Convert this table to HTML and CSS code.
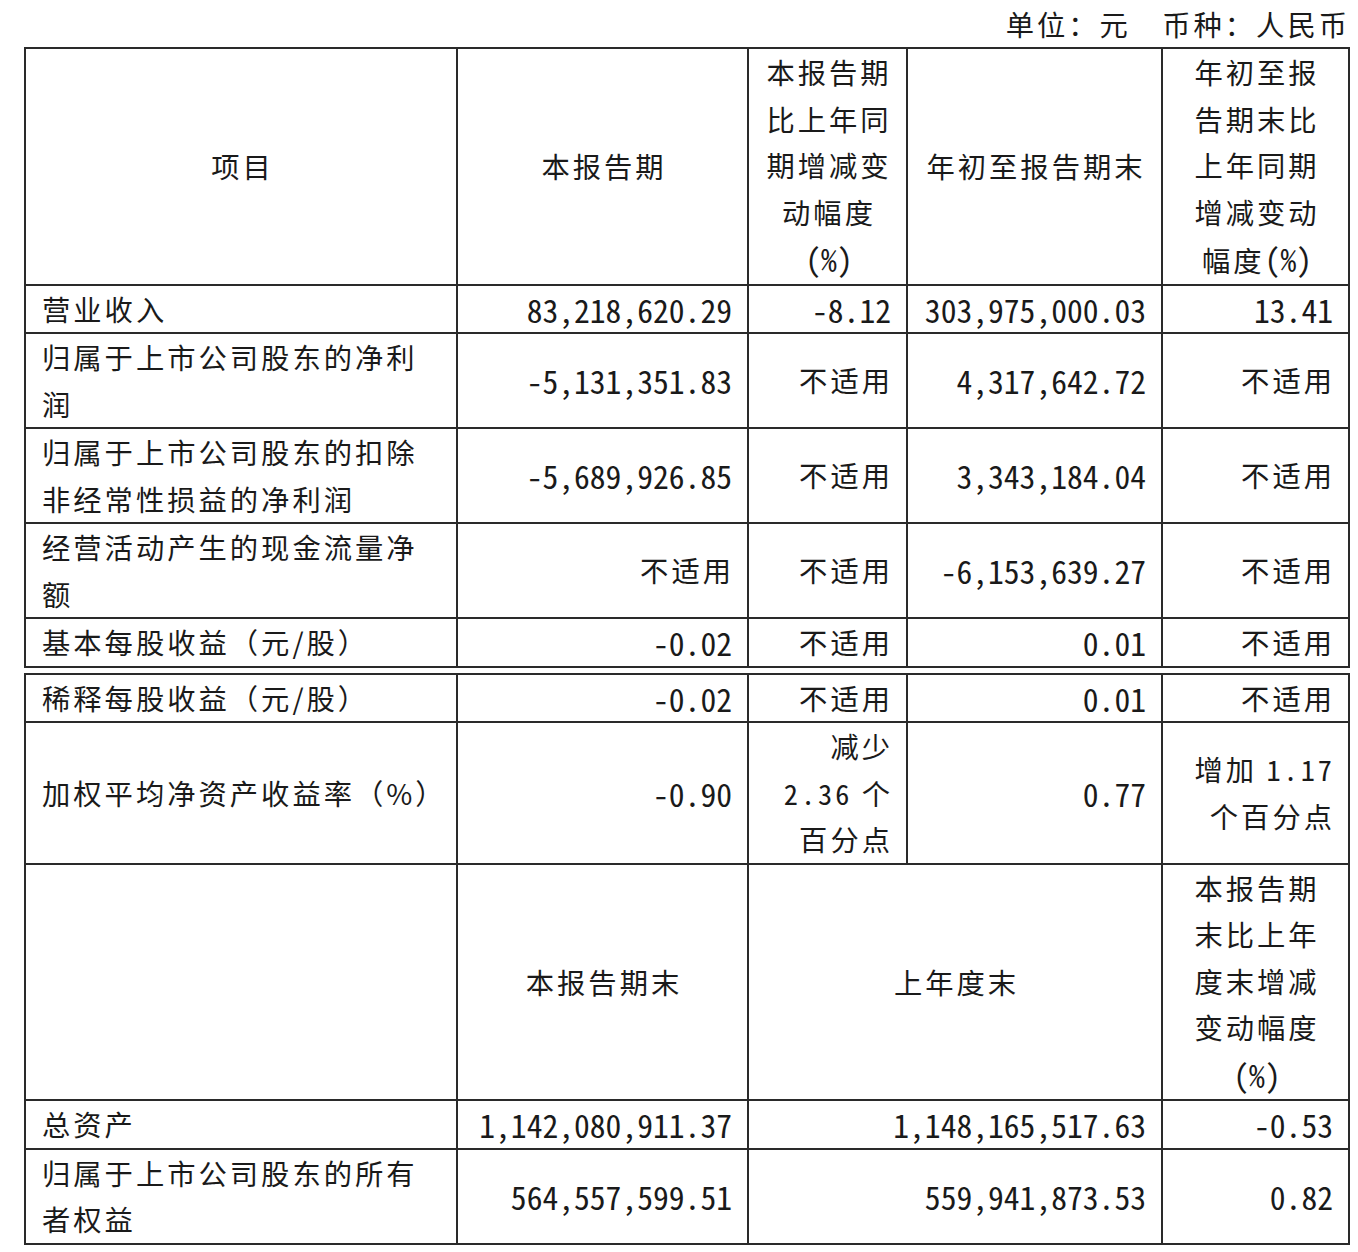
FILE: index.html
```html
<!DOCTYPE html>
<html lang="zh-CN">
<head>
<meta charset="utf-8">
<title>主要会计数据和财务指标</title>
<link rel="stylesheet" href="styles.css">
</head>
<body>
<div class="unit">单位：元　币种：人民币</div>
<table class="fin">
  <colgroup>
    <col class="c1"><col class="c2"><col class="c3"><col class="c4"><col class="c5">
  </colgroup>
  <tr class="head">
    <td class="ctr">项目</td>
    <td class="ctr">本报告期</td>
    <td class="ctr">本报告期<br>比上年同<br>期增减变<br>动幅度<br><span class="num">(%)</span></td>
    <td class="ctr">年初至报告期末</td>
    <td class="ctr">年初至报<br>告期末比<br>上年同期<br>增减变动<br>幅度<span class="num">(%)</span></td>
  </tr>
  <tr>
    <td>营业收入</td>
    <td class="r num">83,218,620.29</td>
    <td class="r num">-8.12</td>
    <td class="r num">303,975,000.03</td>
    <td class="r num">13.41</td>
  </tr>
  <tr>
    <td>归属于上市公司股东的净利<br>润</td>
    <td class="r num">-5,131,351.83</td>
    <td class="r">不适用</td>
    <td class="r num">4,317,642.72</td>
    <td class="r">不适用</td>
  </tr>
  <tr>
    <td>归属于上市公司股东的扣除<br>非经常性损益的净利润</td>
    <td class="r num">-5,689,926.85</td>
    <td class="r">不适用</td>
    <td class="r num">3,343,184.04</td>
    <td class="r">不适用</td>
  </tr>
  <tr>
    <td>经营活动产生的现金流量净<br>额</td>
    <td class="r">不适用</td>
    <td class="r">不适用</td>
    <td class="r num">-6,153,639.27</td>
    <td class="r">不适用</td>
  </tr>
  <tr>
    <td>基本每股收益（元/股）</td>
    <td class="r num">-0.02</td>
    <td class="r">不适用</td>
    <td class="r num">0.01</td>
    <td class="r">不适用</td>
  </tr>
</table>
<table class="fin second">
  <colgroup>
    <col class="c1"><col class="c2"><col class="c3"><col class="c4"><col class="c5">
  </colgroup>
  <tr>
    <td>稀释每股收益（元/股）</td>
    <td class="r num">-0.02</td>
    <td class="r">不适用</td>
    <td class="r num">0.01</td>
    <td class="r">不适用</td>
  </tr>
  <tr>
    <td>加权平均净资产收益率（%）</td>
    <td class="r num">-0.90</td>
    <td class="r">减少<br><span class="mix">2.36</span> 个<br>百分点</td>
    <td class="r num">0.77</td>
    <td class="r">增加 <span class="mix">1.17</span><br>个百分点</td>
  </tr>
  <tr class="head">
    <td></td>
    <td class="ctr">本报告期末</td>
    <td class="ctr" colspan="2">上年度末</td>
    <td class="ctr">本报告期<br>末比上年<br>度末增减<br>变动幅度<br><span class="num">(%)</span></td>
  </tr>
  <tr>
    <td>总资产</td>
    <td class="r num">1,142,080,911.37</td>
    <td class="r num" colspan="2">1,148,165,517.63</td>
    <td class="r num">-0.53</td>
  </tr>
  <tr>
    <td>归属于上市公司股东的所有<br>者权益</td>
    <td class="r num">564,557,599.51</td>
    <td class="r num" colspan="2">559,941,873.53</td>
    <td class="r num">0.82</td>
  </tr>
</table>
</body>
</html>
```
FILE: styles.css
```css
html, body {
  margin: 0;
  padding: 0;
  background: #ffffff;
}

body {
  color: #1a1a1a;
  font-family: "Noto Sans CJK SC", "Noto Sans", sans-serif;
  font-size: 28.3px;
  letter-spacing: 3px;
}

.unit {
  text-align: right;
  line-height: 46px;
  padding-right: 8px;
  padding-top: 1px;
}

.fin {
  border-collapse: collapse;
  table-layout: fixed;
  margin-left: 24px;
  width: 1324px;
}

.fin.second {
  margin-top: 5px;
}

.c1 { width: 432px; }
.c2 { width: 291px; }
.c3 { width: 159px; }
.c4 { width: 255px; }
.c5 { width: 187px; }

.fin td {
  border: 2px solid #2a2a2a;
  padding: 0 13px 0 16px;
  line-height: 46.5px;
  vertical-align: middle;
  text-align: left;
  white-space: nowrap;
}

.fin td.ctr {
  text-align: center;
  padding: 0 4px 0 7px;
}

.fin td.r {
  text-align: right;
}

.num, .mix {
  font-feature-settings: "hwid" 1;
  font-size: 31.6px;
  letter-spacing: 0;
}

.fin td.r.num {
  padding-right: 15px;
}

.mix {
  font-size: 28.3px;
  letter-spacing: 3px;
}
```
